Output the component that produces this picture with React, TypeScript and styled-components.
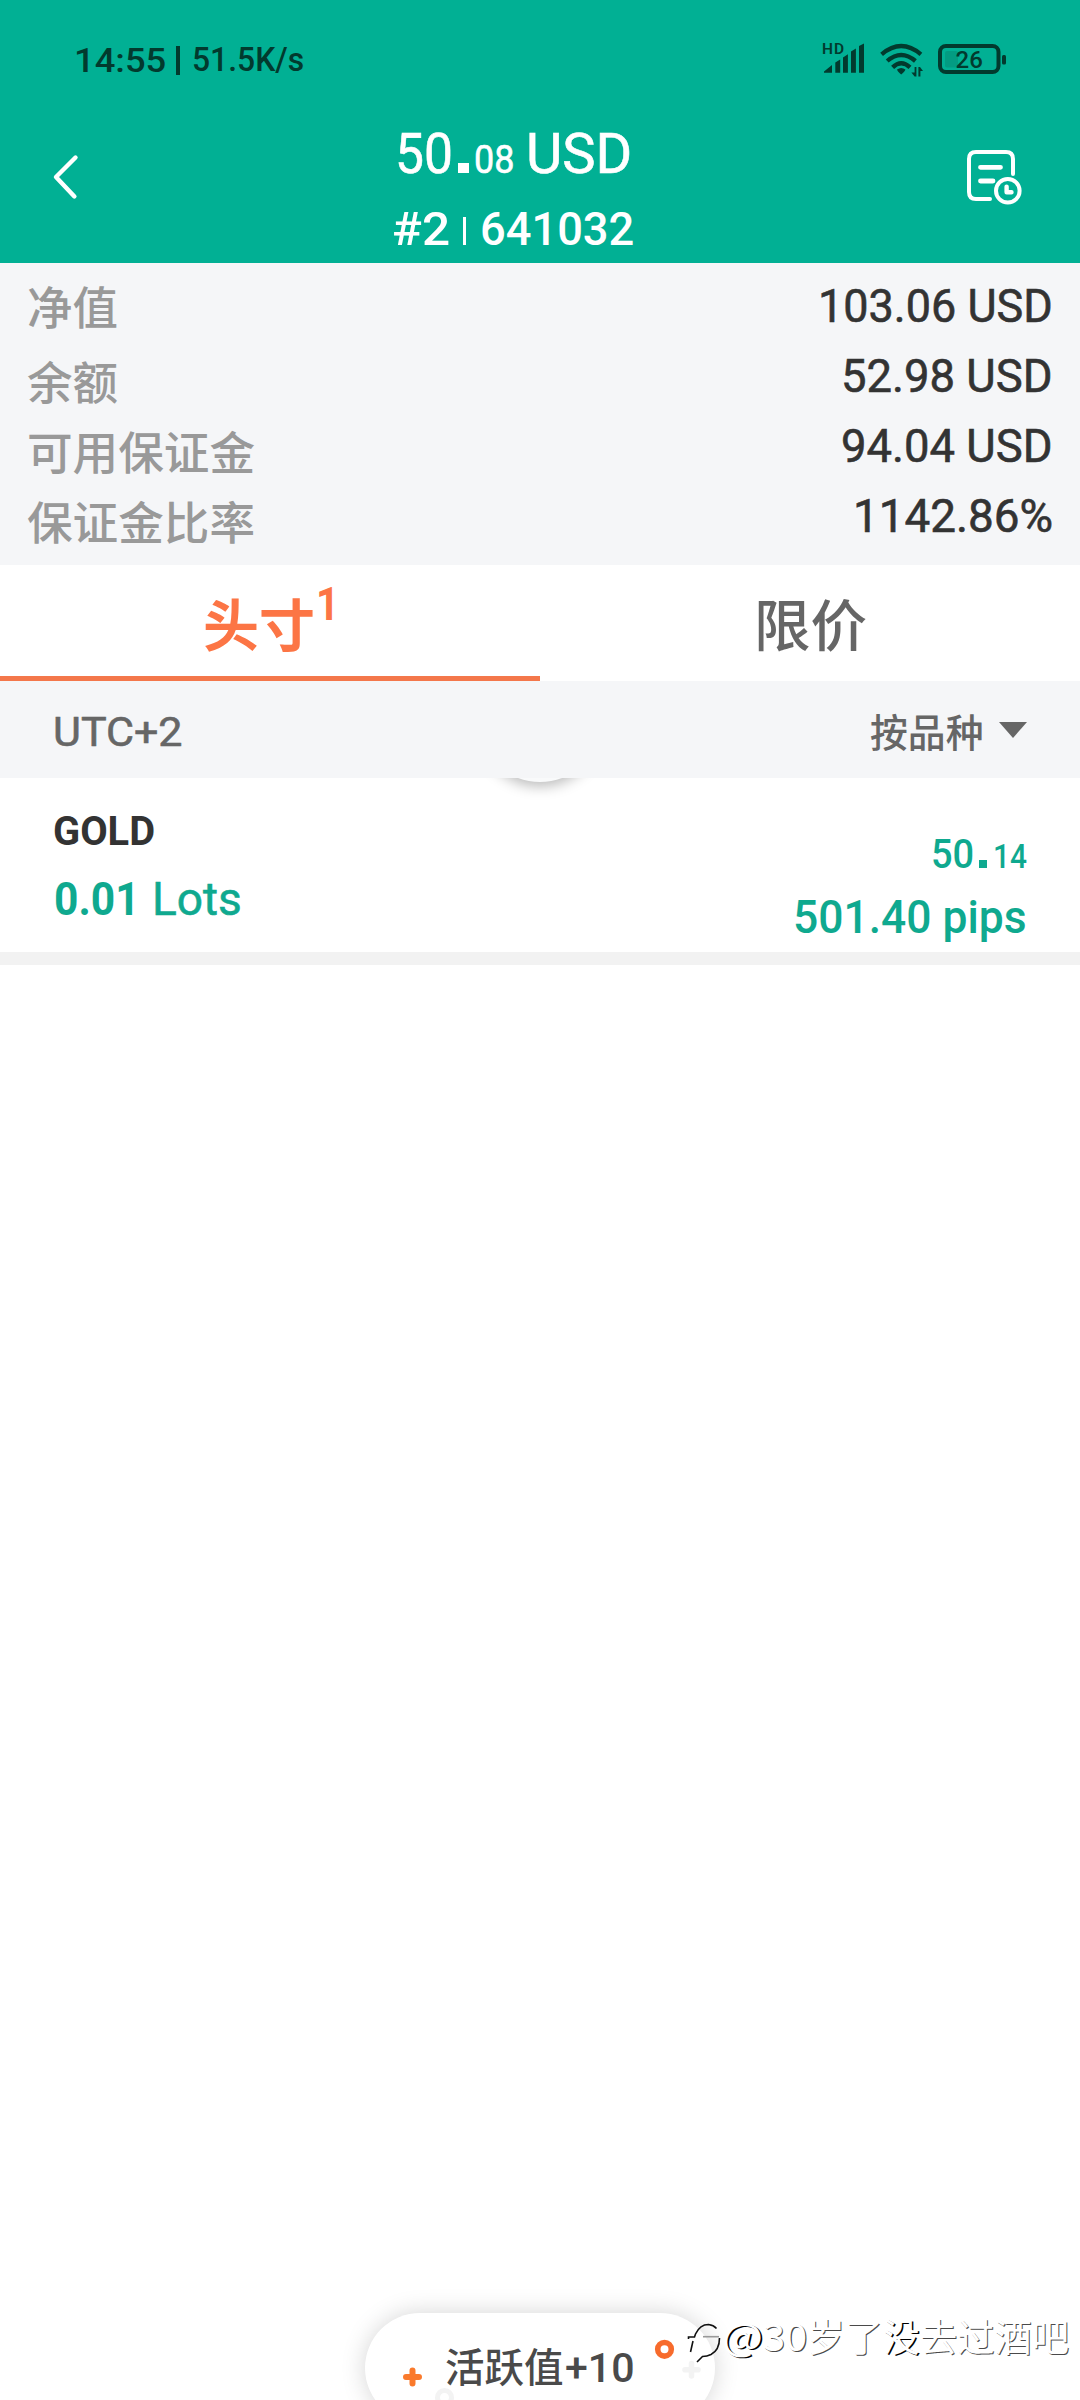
import React, { useLayoutEffect, useRef, useState } from 'react';
import styled, { createGlobalStyle } from 'styled-components';

const TEAL = '#01b094';
const PANEL = '#f5f6f8';
const LATIN = `Roboto, 'Noto Sans CJK SC', sans-serif`;
const CJK = `'Noto Sans CJK SC', sans-serif`;

const GlobalStyle = createGlobalStyle`
  body { margin: 0; background: #fff; }
  * { box-sizing: border-box; }
`;

/* ---------- condensed text ---------- */

interface TypeProps {
  $size: number;
  $weight?: number;
  $color?: string;
  $cjk?: boolean;
  $gap?: number;
}

const Slot = styled.span<TypeProps & { $width: number }>`
  display: inline-block;
  flex: none;
  width: ${(p) => p.$width}px;
  margin-left: ${(p) => p.$gap ?? 0}px;
  white-space: nowrap;
  font-family: ${(p) => (p.$cjk ? CJK : LATIN)};
  font-size: ${(p) => p.$size}px;
  font-weight: ${(p) => p.$weight ?? 500};
  color: ${(p) => p.$color ?? 'inherit'};
  -webkit-text-stroke: ${(p) => (p.$weight === 450 ? '0.6px currentColor' : '0')};
`;

const Glyphs = styled.span`
  display: inline-block;
  transform-origin: 0 50%;
`;

/* Squeezes its text horizontally so that it takes exactly `width` pixels. */
function Fit({ width, children, ...type }: TypeProps & { width: number; children: string }) {
  const ref = useRef<HTMLSpanElement>(null);
  const [scale, setScale] = useState(1);
  useLayoutEffect(() => {
    if (ref.current) setScale(width / ref.current.offsetWidth);
  }, [width, children]);
  return (
    <Slot $width={width} {...type}>
      <Glyphs ref={ref} style={{ transform: `scaleX(${scale})` }}>{children}</Glyphs>
    </Slot>
  );
}

/* ---------- page ---------- */

const Screen = styled.main`
  position: relative;
  display: flex;
  flex-direction: column;
  width: 1080px;
  height: 2400px;
  overflow: hidden;
  background: #fff;
  font-family: ${LATIN};
`;

const Header = styled.header`
  display: flex;
  flex-direction: column;
  height: 263px;
  background: ${TEAL};
  color: #fff;
`;

const StatusBar = styled.div`
  display: flex;
  align-items: center;
  height: 112px;
  padding: 8px 72px 0 74px;
  line-height: 112px;
  color: #023a2e;
`;

const StatusDivider = styled.i`
  width: 4px;
  height: 29px;
  margin-left: 10px;
  background: #023a2e;
`;

const StatusIcons = styled.svg`
  margin-left: auto;
`;

const TitleBar = styled.div`
  display: flex;
  align-items: flex-start;
  justify-content: space-between;
  height: 151px;
  padding: 0 56px 0 50px;
`;

const TitleIcon = styled.svg`
  flex: none;
  margin-top: 36px;
`;

const TitleBlock = styled.div`
  display: flex;
  flex-direction: column;
  width: 246px;
  margin-left: -14px;
`;

const TitleLine = styled.div<{ $height: number; $indent: number }>`
  display: flex;
  align-items: baseline;
  height: ${(p) => p.$height}px;
  line-height: ${(p) => p.$height}px;
  padding-left: ${(p) => p.$indent}px;
`;

const Point = styled.i<{ $size: number; $gap: number; $h?: number }>`
  flex: none;
  width: ${(p) => p.$size}px;
  height: ${(p) => p.$h ?? p.$size}px;
  margin-left: ${(p) => p.$gap}px;
  background: currentColor;
`;

/* ---------- account summary ---------- */

const Summary = styled.section`
  display: flex;
  justify-content: space-between;
  height: 302px;
  padding: 8px 27px 0 27px;
  background: ${PANEL};
`;

const Labels = styled.div`
  display: flex;
  flex-direction: column;
  color: #999;
`;

const Label = styled.div<{ $first?: boolean }>`
  height: ${(p) => (p.$first ? 75 : 70)}px;
  line-height: 70px;
`;

const Values = styled.div`
  display: flex;
  flex-direction: column;
  align-items: flex-end;
  color: #333;
`;

const Value = styled.div`
  height: 70px;
  line-height: 70px;
`;

/* ---------- tabs ---------- */

const Tabs = styled.nav`
  display: grid;
  grid-template-columns: 1fr 1fr;
  grid-template-rows: 116px;
  height: 116px;
`;

const Tab = styled.div<{ $active?: boolean }>`
  display: flex;
  align-items: flex-start;
  justify-content: center;
  height: 116px;
  line-height: 113px;
  color: ${(p) => (p.$active ? '#fc7545' : '#666')};
  border-bottom: ${(p) => (p.$active ? '5px solid #f4774b' : 'none')};
`;

const Count = styled.sup`
  height: 70px;
  line-height: 79px;
  vertical-align: top;
`;

/* ---------- list ---------- */

const FilterBar = styled.div`
  display: flex;
  align-items: center;
  justify-content: space-between;
  height: 97px;
  padding: 7px 53px 0 53px;
  line-height: 92px;
  color: #666;
  background: ${PANEL};
`;

const SortPicker = styled.div`
  display: flex;
  align-items: center;
  height: 92px;
  padding-bottom: 6px;
  line-height: 86px;
`;

const Caret = styled.i`
  margin-left: 15px;
  border: 14px solid transparent;
  border-top: 16px solid #666;
  border-bottom: 0;
`;

const PullHandle = styled.i`
  position: absolute;
  left: 477px;
  top: -122px;
  width: 126px;
  height: 126px;
  border-radius: 50%;
  background: #f9fafb;
  box-shadow: 0 4px 14px rgba(0, 0, 0, 0.28);
`;

const Position = styled.article`
  position: relative;
  display: flex;
  justify-content: space-between;
  height: 187px;
  padding: 0 53px;
  overflow: hidden;
  border-bottom: 13px solid #f2f2f2;
`;

const Side = styled.div<{ $top: number; $end?: boolean }>`
  display: flex;
  flex-direction: column;
  align-items: ${(p) => (p.$end ? 'flex-end' : 'flex-start')};
  padding-top: ${(p) => p.$top}px;
  color: #0fa98f;
`;

const Line = styled.div<{ $height: number }>`
  display: flex;
  align-items: baseline;
  height: ${(p) => p.$height}px;
  line-height: ${(p) => p.$height}px;
`;

/* ---------- overlays ---------- */

const Toast = styled.div`
  position: absolute;
  left: 365px;
  top: 2313px;
  width: 350px;
  height: 110px;
  padding-left: 80px;
  border-radius: 55px;
  background: #fff;
  box-shadow: 0 0 24px rgba(0, 0, 0, 0.17);
  line-height: 104px;
  color: #4a4a4a;
`;

const Confetti = styled.svg`
  position: absolute;
  left: 0;
  top: 0;
`;

const Watermark = styled.div`
  position: absolute;
  left: 686px;
  top: 2305px;
  display: flex;
  align-items: center;
  height: 60px;
  line-height: 60px;
  color: #fff;
  text-shadow: 1px 1px 0 #4a4a4a;
`;

const Strong = styled.span`
  display: flex;
  text-shadow: 1.5px 1px 0 #000;
`;

const summary = {
  labels: [
    ['净值', 91],
    ['余额', 91],
    ['可用保证金', 228],
    ['保证金比率', 228],
  ] as [string, number][],
  values: [
    ['103.06 USD', 235],
    ['52.98 USD', 212],
    ['94.04 USD', 212],
    ['1142.86%', 200],
  ] as [string, number][],
};

export default function App() {
  return (
    <Screen>
      <GlobalStyle />
      <Header>
        <StatusBar>
          <Fit $size={34} width={92}>14:55</Fit>
          <StatusDivider />
          <Fit $size={33} $gap={12} width={112}>51.5K/s</Fit>
          <StatusIcons width="186" height="40" viewBox="822 40 186 40" fill="#023a2e">
            <text x="822" y="53.6" fontFamily="Roboto, sans-serif" fontWeight="600" fontSize="15.5" letterSpacing="1">HD</text>
            <path d="M824 72.8V71.4L832 65V72.8ZM835.3 72.8V62.6L840.2 59.4V72.8ZM843 72.8V57.4L847.9 54.2V72.8ZM851 72.8V51.6L855.9 48.6V72.8ZM859 72.8V46L864 43.5V72.8Z" />
            <g fill="none" stroke="#023a2e" strokeWidth="4.3">
              <path d="M881.6 54.4Q901.2 37.8 920.9 54.4" />
              <path d="M887.2 61Q901.2 48.8 915.4 61" />
              <path d="M892.6 67.4Q901.2 59.2 910 67.4" />
            </g>
            <path d="M897 69.6Q901.2 66.4 905.4 69.6Q905 71.5 901.2 74.4Q897.4 71.5 897 69.6Z" />
            <path d="M914.6 67H916.4V76.6H914.6L911.4 72.6H914.6ZM918.4 76.6V67H920L923 71H920.4V76.6Z" />
            <rect x="940" y="46" width="58.5" height="26" rx="6" fill="none" stroke="#023a2e" strokeWidth="4" />
            <rect x="945" y="51" width="13" height="16.5" rx="2" fill="#039c82" />
            <rect x="1002" y="55" width="4" height="9.5" rx="1.5" />
            <text x="955.6" y="67.8" fontFamily="Roboto, sans-serif" fontWeight="500" fontSize="24">26</text>
          </StatusIcons>
        </StatusBar>
        <TitleBar>
          <TitleIcon width="30" height="58" viewBox="50 148 30 58" fill="none" stroke="#fff" strokeWidth="4.4" strokeLinecap="round" strokeLinejoin="round">
            <path d="M75.5 157.5L56 177L74.4 196.5" />
          </TitleIcon>
          <TitleBlock>
            <TitleLine $height={84} $indent={3}>
              <Fit $size={56} $weight={450} width={58}>50</Fit>
              <Point $size={11} $gap={5} $h={10} />
              <Fit $size={39.5} $gap={5} $weight={450} width={40}>08</Fit>
              <Fit $size={56} $gap={12} $weight={450} width={106}>USD</Fit>
            </TitleLine>
            <TitleLine $height={65} $indent={0}>
              <Fit $size={47} width={58}>#2</Fit>
              <Point $size={3} $gap={13} $h={28} />
              <Fit $size={47} $gap={14} width={154}>641032</Fit>
            </TitleLine>
          </TitleBlock>
          <TitleIcon width="60" height="58" viewBox="964 148 60 58" fill="none" stroke="#fff" strokeWidth="4" strokeLinecap="round" strokeLinejoin="round">
            <path d="M1013 174V159Q1013 152 1006 152H976Q969 152 969 159V192Q969 199 976 199H990" />
            <path d="M980.5 167.3H1000.5M980.5 181H993" strokeWidth="4.8" />
            <circle cx="1007.8" cy="190.8" r="11.8" />
            <path d="M1006.6 186.6V192.2H1011.5" strokeWidth="4.4" />
          </TitleIcon>
        </TitleBar>
      </Header>

      <Summary>
        <Labels>
          {summary.labels.map(([text, width], i) => (
            <Label key={text} $first={i === 0}>
              <Fit $cjk $size={45} width={width}>{text}</Fit>
            </Label>
          ))}
        </Labels>
        <Values>
          {summary.values.map(([text, width]) => (
            <Value key={text}>
              <Fit $size={46.5} $weight={450} width={width}>{text}</Fit>
            </Value>
          ))}
        </Values>
      </Summary>

      <Tabs>
        <Tab $active>
          <Fit $cjk $size={56} $weight={700} $gap={2} width={112}>头寸</Fit>
          <Count>
            <Fit $size={46} $weight={700} $gap={1} width={23}>1</Fit>
          </Count>
        </Tab>
        <Tab>
          <Fit $cjk $size={56} $weight={500} width={113}>限价</Fit>
        </Tab>
      </Tabs>

      <FilterBar>
        <Fit $size={40} $weight={450} width={129}>UTC+2</Fit>
        <SortPicker>
          <Fit $cjk $size={38.5} width={114}>按品种</Fit>
          <Caret />
        </SortPicker>
      </FilterBar>

      <Position>
        <PullHandle />
        <Side $top={18}>
          <Line $height={70}>
            <Fit $size={41} $weight={700} $color="#333" width={102}>GOLD</Fit>
          </Line>
          <Line $height={66}>
            <Fit $size={47} $weight={700} $gap={1} width={86}>0.01</Fit>
            <Fit $size={46.5} $gap={12} $weight={450} width={90}>Lots</Fit>
          </Line>
        </Side>
        <Side $top={43} $end>
          <Line $height={66}>
            <Fit $size={41.5} width={43}>50</Fit>
            <Point $size={8} $gap={5} />
            <Fit $size={32.5} $gap={6} width={34}>14</Fit>
          </Line>
          <Line $height={61}>
            <Fit $size={46.5} width={234}>501.40 pips</Fit>
          </Line>
        </Side>
      </Position>

      <Toast>
        <Confetti width="350" height="87" viewBox="365 2313 350 87" fill="none" strokeLinecap="round">
          <path d="M412.5 2370.5V2383.5M406 2377H419" stroke="#fa7a2c" strokeWidth="6" />
          <circle cx="664.5" cy="2349.3" r="6.8" stroke="#f76b2c" strokeWidth="5.6" />
          <circle cx="444.5" cy="2397.5" r="7" stroke="#f3f3f3" strokeWidth="5" />
          <path d="M691.5 2363.5V2376M685 2369.7H698" stroke="#f3f3f3" strokeWidth="5.6" />
        </Confetti>
        <Fit $cjk $size={39.5} width={119}>活跃值</Fit>
        <Fit $size={40.5} $gap={1} width={70}>+10</Fit>
      </Toast>

      <Watermark>
        <svg width="36" height="44" viewBox="686 2313 36 44" overflow="visible" fill="none" stroke="#111" strokeWidth="1.6">
          <path d="M688.5 2339V2337H694.5L695.5 2334Q700 2324.5 708.5 2324.5Q713.5 2325 716.5 2328.5" />
          <path d="M693 2341L690.5 2352" />
          <path d="M719.5 2338Q719.5 2350 711 2354.5Q707 2356.5 702.5 2356.5L697 2362" />
          <path d="M703 2336.7H719" stroke="#999" />
        </svg>
        <Strong><Fit $cjk $weight={400} $size={38} width={41}>@</Fit></Strong>
        <Fit $cjk $weight={400} $size={38} width={44}>30</Fit>
        <Fit $cjk $weight={400} $size={37.5} width={76}>岁了</Fit>
        <Strong><Fit $cjk $weight={400} $size={37.5} width={37}>没</Fit></Strong>
        <Fit $cjk $weight={400} $size={37.5} width={149}>去过酒吧</Fit>
      </Watermark>
    </Screen>
  );
}
